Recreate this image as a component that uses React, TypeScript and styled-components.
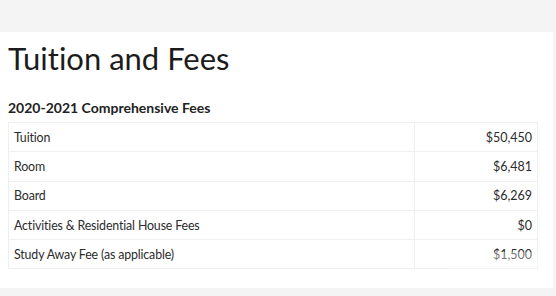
import styled, { createGlobalStyle } from "styled-components";

const GlobalStyle = createGlobalStyle`
    html, body {
        margin: 0;
        padding: 0;
        background: #f4f4f4;
    }
    body {
        font-family: Lato, "Open Sans", sans-serif;
        font-variant-ligatures: none;
        color: #222;
    }
`;

const Page = styled.div`
    display: flex;
    flex-direction: column;
    width: 556px;
    height: 296px;
    overflow: hidden;
`;

const TopBar = styled.div`
    height: 32px;
    background: #f4f4f4;
    flex-shrink: 0;
`;

const Main = styled.main`
    position: relative;
    background: #fff;
    height: 256px;
    margin-right: 3px;
    padding: 0 8px;
    box-sizing: border-box;
`;

const Title = styled.h1`
    margin: 7px 0 0;
    font-size: 31px;
    line-height: 38px;
    font-weight: 400;
    letter-spacing: 0;
    color: #1c1c1c;
`;

const SubTitle = styled.h2`
    margin: 22px 0 6px;
    font-size: 14px;
    line-height: 17px;
    font-weight: 700;
    color: #222;
`;

const FeeTable = styled.table`
    width: 530px;
    border-collapse: collapse;
    font-size: 12.4px;
    color: #2b2b2b;
`;

const Cell = styled.td<{ $right?: boolean }>`
    height: 28.3px;
    padding: 0 5px;
    border: 1px solid #edf0f3;
    text-align: ${(p) => (p.$right ? "right" : "left")};
    width: ${(p) => (p.$right ? "112px" : "auto")};
    font-size: ${(p) => (p.$right ? "12.5px" : "inherit")};
    letter-spacing: ${(p) => (p.$right ? "0" : "-0.15px")};
`;

const Fade = styled.div`
    position: absolute;
    left: 448px;
    top: 220px;
    width: 104px;
    height: 36px;
    background: rgba(255, 255, 255, 0.35);
`;

const fees = [
    { label: "Tuition", amount: "$50,450" },
    { label: "Room", amount: "$6,481" },
    { label: "Board", amount: "$6,269" },
    { label: "Activities & Residential House Fees", amount: "$0" },
    { label: "Study Away Fee (as applicable)", amount: "$1,500" },
];

export default () => {
    return (
        <Page>
            <GlobalStyle />
            <TopBar />
            <Main>
                <Title>Tuition and Fees</Title>
                <SubTitle>2020-2021 Comprehensive Fees</SubTitle>
                <FeeTable>
                    <tbody>
                        {fees.map((fee) => (
                            <tr key={fee.label}>
                                <Cell>{fee.label}</Cell>
                                <Cell $right>{fee.amount}</Cell>
                            </tr>
                        ))}
                    </tbody>
                </FeeTable>
                <Fade />
            </Main>
        </Page>
    );
};
